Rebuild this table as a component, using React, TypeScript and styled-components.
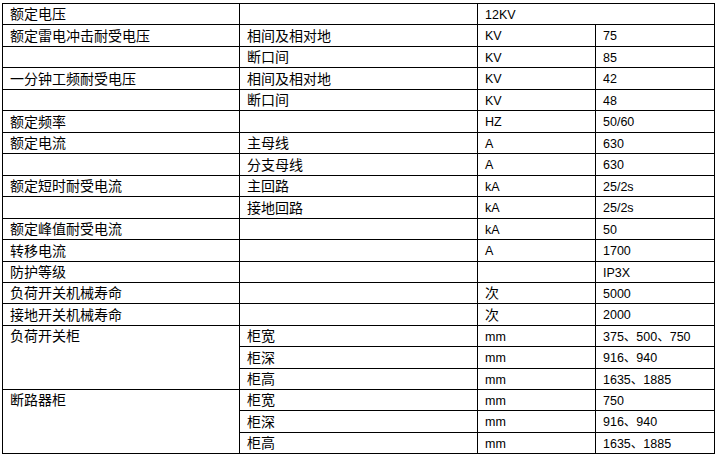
import React from 'react';
import styled, { createGlobalStyle } from 'styled-components';

const GlobalStyle = createGlobalStyle`
  html, body {
    margin: 0;
    padding: 0;
    background: #fff;
  }
`;

const Page = styled.div`
  padding: 3px 0 0 2px;
`;

// row heights taken line-to-line, each includes its own bottom border
const ROW_HEIGHTS = [21, 22, 21, 22, 21, 22, 21, 22, 21, 22, 21, 22, 21, 21, 22, 21, 22, 21, 21, 22, 21];

const Sheet = styled.div`
  display: grid;
  grid-template-columns: 237px 238px 118px 119px;
  grid-template-rows: ${ROW_HEIGHTS.map((h) => `${h}px`).join(' ')};
  width: max-content;
  border-top: 1px solid #000;
  border-left: 1px solid #000;
  color: #000;
`;

const Cell = styled.div<{ $zh?: boolean; $rows?: number; $cols?: number }>`
  box-sizing: border-box;
  display: flex;
  align-items: ${(p) => (p.$rows && p.$rows > 1 ? 'flex-start' : 'center')};
  grid-row: span ${(p) => p.$rows || 1};
  grid-column: span ${(p) => p.$cols || 1};
  padding: ${(p) => (p.$zh ? '0 0 0 7px' : '1px 0 0 7px')};
  border-right: 1px solid #000;
  border-bottom: 1px solid #000;
  font-family: 'Liberation Sans', 'Noto Sans CJK SC', sans-serif;
  font-size: ${(p) => (p.$zh ? '14px' : '12.5px')};
  line-height: 20px;
  white-space: nowrap;
  overflow: hidden;
`;

type Item = string | { t: string; rows?: number; cols?: number };

const rows: Item[][] = [
  ['额定电压', '', { t: '12KV', cols: 2 }],
  ['额定雷电冲击耐受电压', '相间及相对地', 'KV', '75'],
  ['', '断口间', 'KV', '85'],
  ['一分钟工频耐受电压', '相间及相对地', 'KV', '42'],
  ['', '断口间', 'KV', '48'],
  ['额定频率', '', 'HZ', '50/60'],
  ['额定电流', '主母线', 'A', '630'],
  ['', '分支母线', 'A', '630'],
  ['额定短时耐受电流', '主回路', 'kA', '25/2s'],
  ['', '接地回路', 'kA', '25/2s'],
  ['额定峰值耐受电流', '', 'kA', '50'],
  ['转移电流', '', 'A', '1700'],
  ['防护等级', '', '', 'IP3X'],
  ['负荷开关机械寿命', '', '次', '5000'],
  ['接地开关机械寿命', '', '次', '2000'],
  [{ t: '负荷开关柜', rows: 3 }, '柜宽', 'mm', '375、500、750'],
  ['柜深', 'mm', '916、940'],
  ['柜高', 'mm', '1635、1885'],
  [{ t: '断路器柜', rows: 3 }, '柜宽', 'mm', '750'],
  ['柜深', 'mm', '916、940'],
  ['柜高', 'mm', '1635、1885'],
];

const isZh = (s: string) => /[\u4e00-\u9fff]/.test(s);

export default function App() {
  return (
    <Page>
      <GlobalStyle />
      <Sheet>
        {rows.map((row, r) =>
          row.map((item, c) => {
            const cell = typeof item === 'string' ? { t: item } : item;
            return (
              <Cell key={`${r}-${c}`} $zh={isZh(cell.t)} $rows={cell.rows} $cols={cell.cols}>
                {cell.t}
              </Cell>
            );
          })
        )}
      </Sheet>
    </Page>
  );
}
